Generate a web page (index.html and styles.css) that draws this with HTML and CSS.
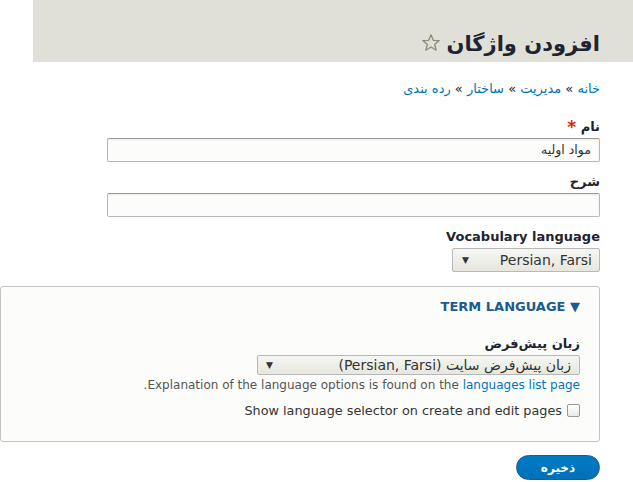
FILE: index.html
```html
<!DOCTYPE html>
<html lang="fa" dir="rtl">
<head>
<meta charset="utf-8">
<link rel="stylesheet" href="styles.css">
</head>
<body>
<header class="page-header">
  <h1 class="page-title">افزودن واژگان <span class="star"><svg width="20" height="20" viewBox="0 0 20 20"><path d="M10 1.8 L12.3 7.3 L18.2 7.6 L13.6 11.4 L15.2 17.2 L10 14 L4.8 17.2 L6.4 11.4 L1.8 7.6 L7.7 7.3 Z" fill="none" stroke="#8b8b78" stroke-width="1.3" stroke-linejoin="round"/></svg></span></h1>
</header>
<main class="content">
  <nav class="breadcrumb"><a href="#">خانه</a> » <a href="#">مدیریت</a> » <a href="#">ساختار</a> » <a href="#">رده بندی</a></nav>
  <div class="form-item">
    <label class="label">نام <span class="req">*</span></label>
    <div class="input">مواد اوليه</div>
  </div>
  <div class="form-item">
    <label class="label">شرح</label>
    <div class="input"></div>
  </div>
  <div class="form-item">
    <label class="label">Vocabulary language</label>
    <div class="select select-vocab"><span class="sel-text">Persian, Farsi</span><span class="arrow">▼</span></div>
  </div>
  <fieldset class="details">
    <div class="summary"><span dir="ltr">TERM LANGUAGE ▼</span></div>
    <div class="details-body">
      <label class="label">زبان پیش‌فرض</label>
      <div class="select select-lang"><span class="sel-text">زبان پیش‌فرض سایت (Persian, Farsi)</span><span class="arrow">▼</span></div>
      <div class="desc">Explanation of the language options is found on the <a href="#">languages list page</a>.</div>
      <div class="check-row"><span class="checkbox"></span><span class="check-label">Show language selector on create and edit pages</span></div>
    </div>
  </fieldset>
  <div class="actions"><button class="button">ذخیره</button></div>
</main>
</body>
</html>
```
FILE: styles.css
```css
html, body {
  margin: 0;
  padding: 0;
  background: #fff;
  font-family: "DejaVu Sans", "Noto Sans", sans-serif;
  color: #222330;
  overflow: hidden;
}
.page-header {
  margin-left: 33px;
  height: 62px;
  background: #e0e0d8;
  box-sizing: border-box;
  padding: 30px 33px 0 0;
}
.page-title {
  margin: 0;
  font-size: 21px;
  font-weight: bold;
  line-height: 28px;
  color: #222330;
  display: flex;
  align-items: center;
  gap: 6px;
}
.star { display: inline-flex; margin-top: -2px; }
.content {
  padding: 0 33px 0 0;
}
.breadcrumb {
  margin-top: 18px;
  font-size: 13px;
  line-height: 18px;
  color: #222;
}
.breadcrumb a, .desc a { color: #0074bd; text-decoration: none; }
.form-item { margin-top: 18px; display: flex; flex-direction: column; align-items: flex-start; }
.form-item + .form-item { margin-top: 11px; }
.label {
  font-weight: bold;
  font-size: 13px;
  line-height: 18px;
  margin-bottom: 2px;
  color: #222330;
}
.req { color: #e32700; font-size: 17px; position: relative; top: 2px; }
.input {
  width: 493px;
  height: 24px;
  box-sizing: border-box;
  border: 1px solid #b8b8b8;
  border-top-color: #999;
  border-radius: 2px;
  background: #fcfcfa;
  box-shadow: inset 0 1px 2px rgba(0,0,0,0.08);
  font-size: 12.5px;
  line-height: 22px;
  padding: 0 8px;
  color: #333;
}
.select {
  box-sizing: border-box;
  border: 1px solid #b8b8b8;
  border-radius: 2px;
  background: linear-gradient(#f6f6f3, #e7e7df);
  display: flex;
  justify-content: space-between;
  align-items: center;
  color: #333;
}
.select-vocab {
  width: 148px;
  height: 24px;
  padding: 0 7px 0 9px;
  font-size: 14px;
}
.arrow { font-size: 9px; color: #333; }
.details {
  margin: 14px 0 0 0;
  width: 600px;
  box-sizing: border-box;
  border: 1px solid #c4c4c4;
  border-radius: 3px;
  background: #fcfcfa;
  padding: 0;
}
.summary {
  padding: 12px 19px 0 0;
  font-size: 13px;
  font-weight: bold;
  color: #1b5b8f;
  line-height: 16px;
}
.details-body {
  padding: 20px 19px 23px 0;
  display: flex;
  flex-direction: column;
  align-items: flex-start;
}
.details-body .label { margin-bottom: 2px; }
.select-lang {
  width: 323px;
  height: 20px;
  padding: 0 8px;
  font-size: 14px;
}
.desc {
  margin-top: 2px;
  font-size: 12px;
  line-height: 17px;
  color: #555;
}
.check-row {
  margin-top: 9px;
  display: flex;
  align-items: center;
  gap: 5px;
  font-size: 12.8px;
  color: #333;
}
.checkbox {
  width: 11px;
  height: 11px;
  border: 1px solid #999;
  border-radius: 2px;
  background: linear-gradient(#fff, #e8e8e8);
}
.actions { margin-top: 13px; }
.button {
  width: 84px;
  height: 25px;
  border-radius: 20px;
  border: 1px solid #1e5c90;
  background: linear-gradient(#007bc6, #0071b8);
  color: #fff;
  font-family: "DejaVu Sans", sans-serif;
  font-weight: bold;
  font-size: 12px;
  padding: 0;
}
```
